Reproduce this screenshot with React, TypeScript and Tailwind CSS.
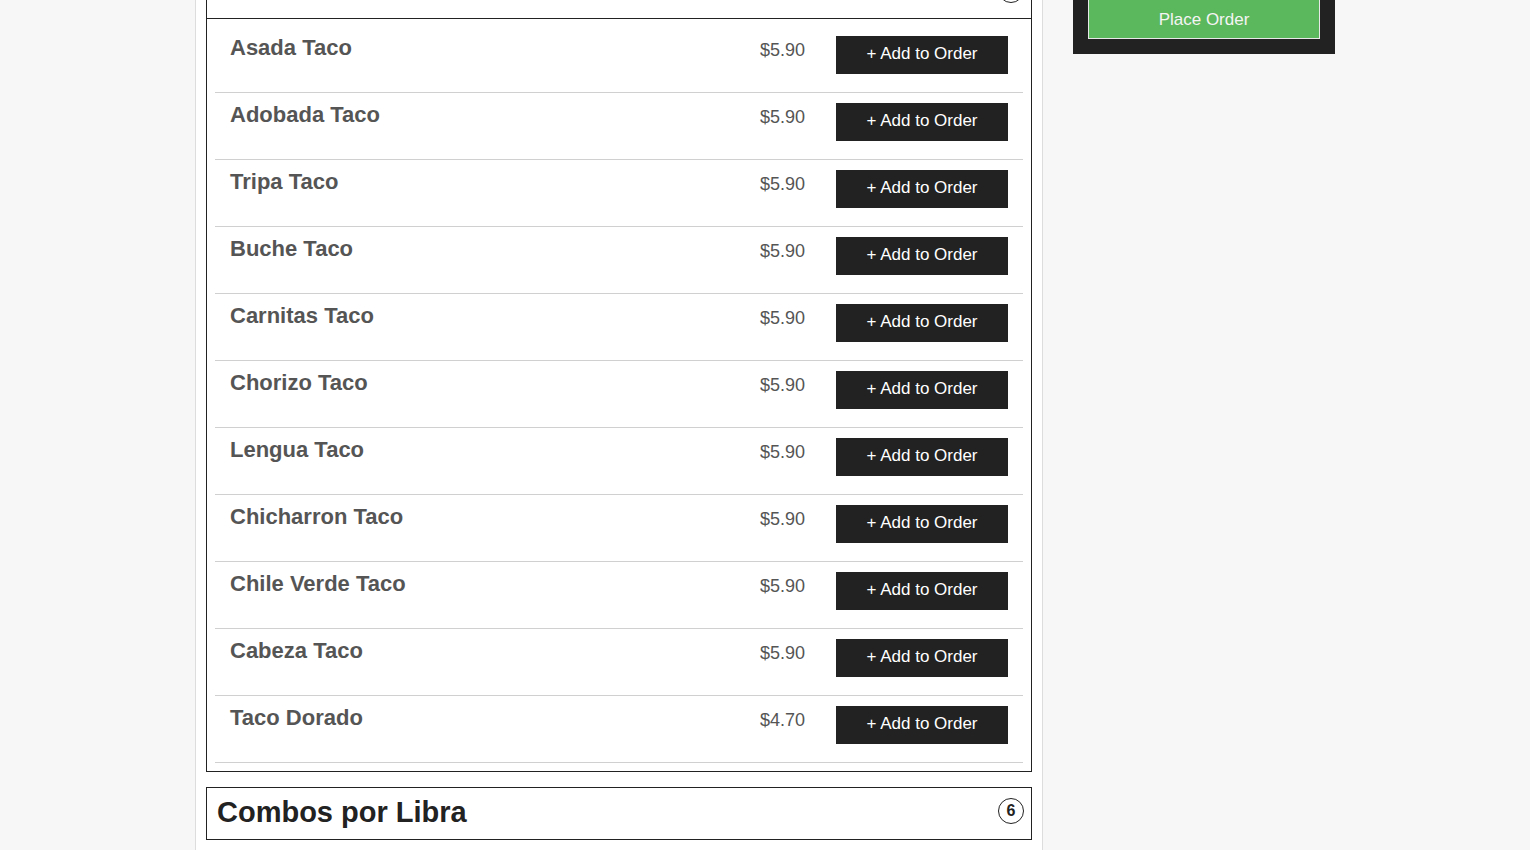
import React from 'react'

type Item = {
  name: string
  price: string
}

const tacos: Item[] = [
  { name: 'Asada Taco', price: '$5.90' },
  { name: 'Adobada Taco', price: '$5.90' },
  { name: 'Tripa Taco', price: '$5.90' },
  { name: 'Buche Taco', price: '$5.90' },
  { name: 'Carnitas Taco', price: '$5.90' },
  { name: 'Chorizo Taco', price: '$5.90' },
  { name: 'Lengua Taco', price: '$5.90' },
  { name: 'Chicharron Taco', price: '$5.90' },
  { name: 'Chile Verde Taco', price: '$5.90' },
  { name: 'Cabeza Taco', price: '$5.90' },
  { name: 'Taco Dorado', price: '$4.70' },
]

function Badge({ count }: { count: number }) {
  return (
    <span className="mt-[10px] flex h-[26px] w-[26px] shrink-0 items-center justify-center rounded-full border border-[#222] text-[16px] font-bold leading-none text-[#222]">
      {count}
    </span>
  )
}

function SectionHeader({ title, count, open }: { title: string; count: number; open?: boolean }) {
  return (
    <div
      className={
        open
          ? 'flex h-[52px] items-start justify-between border-b border-[#222] pl-[10px] pr-[7px]'
          : 'flex h-[51px] items-start justify-between pl-[10px] pr-[7px]'
      }
    >
      <h2
        className={
          open
            ? 'text-[29px] font-bold leading-[33px] text-[#222]'
            : 'pt-[8px] text-[29px] font-bold leading-[33px] text-[#222]'
        }
      >
        {title}
      </h2>
      <Badge count={count} />
    </div>
  )
}

function MenuRow({ item }: { item: Item }) {
  return (
    <div className="flex h-[67px] items-start border-b border-[#d0d0d0] pl-[15px] pr-[15px]">
      <div className="mt-[9px] flex-1 text-[22px] font-bold leading-[25px] text-[#555]">{item.name}</div>
      <div className="mt-[14px] text-[18px] leading-[21px] text-[#555]">{item.price}</div>
      <button className="ml-[31px] mt-[10px] h-[38px] w-[172px] bg-[#222] pb-[3px] text-[17px] leading-[20px] text-white">
        + Add to Order
      </button>
    </div>
  )
}

export default function App() {
  return (
    <div className="min-h-screen w-full bg-[#f7f7f7] font-['Liberation_Sans',Arial,sans-serif]">
      <div className="mx-auto flex w-[1140px] items-start gap-[30px]">
        {/* menu column */}
        <div className="min-h-screen w-[848px] border-x border-[#ddd] bg-white px-[10px] pb-10">
          <div className="mt-[-34px] border border-[#222]">
            <SectionHeader title="Tacos" count={11} open />
            <div className="px-[8px] pt-[7px] pb-[8px]">
              {tacos.map(t => (
                <MenuRow key={t.name} item={t} />
              ))}
            </div>
          </div>

          <div className="mt-[15px] border border-[#222]">
            <SectionHeader title="Combos por Libra" count={6} />
          </div>
        </div>

        {/* order sidebar */}
        <div className="mt-[-1px] w-[262px] bg-[#222] px-[15px] pb-[15px]">
          <button className="h-[40px] w-full border border-[#e8e8e8] bg-[#5cb85c] pt-[2px] text-[17px] leading-[20px] text-[#f4f4f4]">
            Place Order
          </button>
        </div>
      </div>
    </div>
  )
}
